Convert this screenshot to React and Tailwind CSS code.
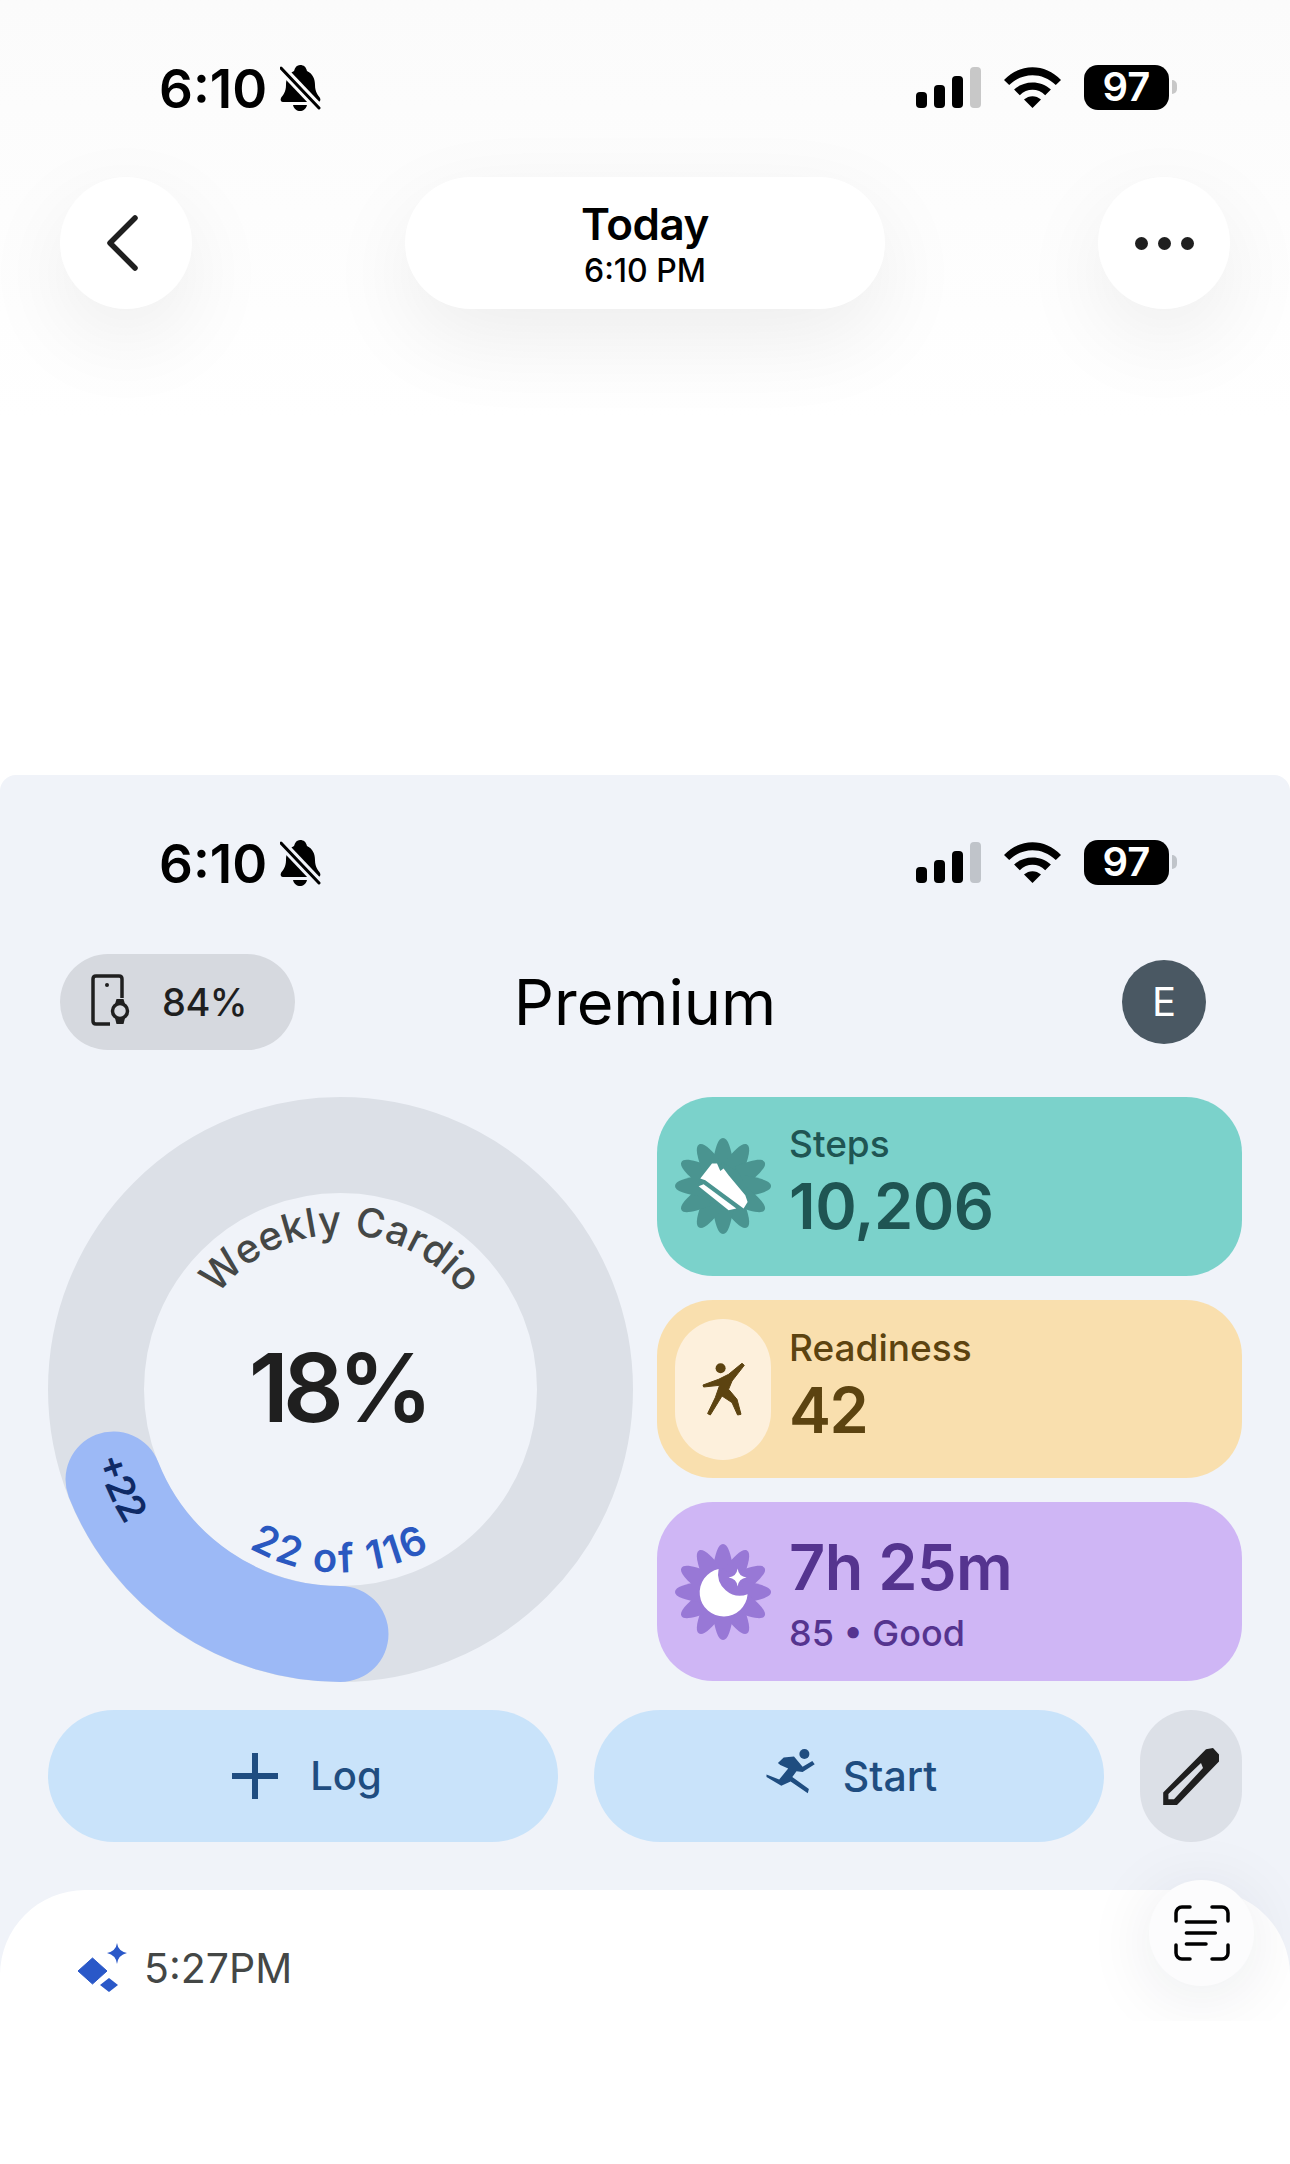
const petals = [0, 30, 60, 90, 120, 150, 180, 210, 240, 270, 300, 330];

// twelve-petal badge behind the steps and sleep icons
function Burst({ fill, children }) {
  return (
    <svg width="96" height="96" viewBox="0 0 96 96" className="shrink-0">
      <circle cx="48" cy="48" r="30" fill={fill} />
      {petals.map((deg) => (
        <path
          key={deg}
          d="M0 -48 C5 -48 8 -38 11 -20 L-11 -20 C-8 -38 -5 -48 0 -48 Z"
          fill={fill}
          transform={`translate(48 48) rotate(${deg})`}
        />
      ))}
      {children}
    </svg>
  );
}

function BellOff({ cut }) {
  return (
    <svg width="41" height="46" viewBox="0 0 41 46" className="ml-[13px] mt-[1px]">
      <path d="M20 0 C24 0 26 2 27 6 C33 9 35 14 35 20 C35 27 38 30 40 33 C41 35 40 37 38 37 H3 C1 37 0 35 1 33 C3 30 6 27 6 20 C6 14 8 9 14 6 C15 2 17 0 20 0 Z" fill="black" />
      <path d="M13 40 H27 C26 44 23 46 20 46 C17 46 14 44 13 40 Z" fill="black" />
      <path d="M1 3 L39 43" className={cut} stroke="currentColor" strokeWidth="9" />
      <path d="M1 3 L39 43" stroke="black" strokeWidth="3" strokeLinecap="round" />
    </svg>
  );
}

// same phone status bar at the top of both screens, only the greys differ
function StatusBar({ cut, off }) {
  return (
    <div className="flex items-center justify-between pt-[64px] pl-[159px] pr-[113px] h-[110px]">
      <div className="flex items-center">
        <span className="mt-[3px] text-[53px] leading-[46px] font-semibold text-black">6:10</span>
        <BellOff cut={cut} />
      </div>
      <div className="flex items-center">
        <div className="flex items-end gap-[7px] h-[41px]">
          <div className="w-[11px] h-[16px] rounded-[4px] bg-black" />
          <div className="w-[11px] h-[23px] rounded-[4px] bg-black" />
          <div className="w-[11px] h-[32px] rounded-[4px] bg-black" />
          <div className={`w-[11px] h-[41px] rounded-[4px] ${off}`} />
        </div>
        <svg width="57" height="41" viewBox="0 0 57 41" className="ml-[23px]">
          <path d="M0 13 C16 -4 41 -4 57 13 L51.8 18 C38 5 19 5 5.2 18 Z" fill="black" />
          <path d="M10.1 22.6 C20 13 37 13 46.9 22.6 L41.2 28.3 C34 21 23 21 15.8 28.3 Z" fill="black" />
          <path d="M20 32.5 C25 28 32 28 37 32.5 L28.5 41 Z" fill="black" />
        </svg>
        <div className="ml-[23px] w-[85px] h-[45px] rounded-[14px] bg-black flex items-center justify-center text-white text-[40px] font-semibold leading-none">
          97
        </div>
        <div className={`ml-[3px] w-[5px] h-[14px] rounded-r-full ${off}`} />
      </div>
    </div>
  );
}

function StatCard({ bg, icon, children }) {
  return (
    <div className={`flex-1 flex items-center pl-[18px] gap-[18px] rounded-[56px] ${bg}`}>
      {icon}
      <div className="flex flex-col">{children}</div>
    </div>
  );
}

function CardioRing() {
  return (
    <svg width="585" height="585" viewBox="0 0 585 585" className="shrink-0">
      <defs>
        <path id="topArc" d="M137.5 292.5 A155 155 0 0 1 447.5 292.5" />
        <path id="bottomArc" d="M109.5 292.5 A183 183 0 0 0 475.5 292.5" />
        <path id="gainArc" d="M48.3 362.5 A254 254 0 0 0 292.5 546.5" />
      </defs>
      <circle cx="292.5" cy="292.5" r="244.5" fill="none" stroke="#dce0e7" strokeWidth="96" />
      <path d="M65.5 382.5 A244.5 244.5 0 0 0 292.5 537" fill="none" stroke="#9cb9f6" strokeWidth="96" strokeLinecap="round" />
      <text fontSize="40" fontWeight="500" fill="#444746" letterSpacing="0.5">
        <textPath href="#topArc" startOffset="50%" textAnchor="middle">Weekly Cardio</textPath>
      </text>
      <text x="290" y="325" textAnchor="middle" fontSize="95" fontWeight="600" fill="#1f1f1f" letterSpacing="-6">18%</text>
      <text fontSize="40" fontWeight="600" fill="#2a58c0" letterSpacing="2.5">
        <textPath href="#bottomArc" startOffset="50%" textAnchor="middle">22 of 116</textPath>
      </text>
      <text fontSize="38" fontWeight="600" fill="#0f2a66">
        <textPath href="#gainArc">+22</textPath>
      </text>
    </svg>
  );
}

export default function App() {
  return (
    <div className="w-[1290px] h-[2164px] bg-white overflow-hidden font-['Inter',sans-serif]">
      {/* Today screen, only its header is in view */}
      <div className="h-[775px] bg-gradient-to-b from-[#fbfbfb] to-white to-[420px]">
        <StatusBar cut="text-[#fcfcfc]" off="bg-[#c8c8c8]" />
        <div className="mt-[67px] px-[60px] flex justify-between">
          <button className="w-[132px] h-[132px] rounded-full bg-white shadow-[0_30px_90px_rgba(0,0,0,0.07)] flex items-center justify-center">
            <svg width="40" height="58" viewBox="0 0 40 58" className="mr-[6px]">
              <path d="M32 4 L7 29 L32 54" fill="none" stroke="#1f1f1f" strokeWidth="5.5" strokeLinecap="round" strokeLinejoin="round" />
            </svg>
          </button>
          <div className="w-[480px] h-[132px] rounded-full bg-white shadow-[0_30px_90px_rgba(0,0,0,0.07)] flex flex-col items-center justify-center text-black">
            <span className="text-[44px] leading-[56px] font-semibold tracking-[-0.5px]">Today</span>
            <span className="text-[32px] leading-[38px] font-medium">6:10 PM</span>
          </div>
          <button className="w-[132px] h-[132px] rounded-full bg-white shadow-[0_30px_90px_rgba(0,0,0,0.07)] flex items-center justify-center gap-[10px]">
            <span className="w-[13px] h-[13px] rounded-full bg-[#1f1f1f]" />
            <span className="w-[13px] h-[13px] rounded-full bg-[#1f1f1f]" />
            <span className="w-[13px] h-[13px] rounded-full bg-[#1f1f1f]" />
          </button>
        </div>
      </div>

      {/* Premium screen, cut off at the bottom */}
      <div className="relative h-[1246px] rounded-t-[16px] bg-[#f0f3f9] overflow-hidden flex flex-col">
        <StatusBar cut="text-[#f0f3f9]" off="bg-[#c0c4ca]" />

        <div className="mt-[69px] px-[60px] h-[96px] grid grid-cols-[1fr_auto_1fr] items-center">
          <div className="justify-self-start w-[235px] h-[96px] rounded-full bg-[#d6d9df] flex items-center pl-[30px] gap-[32px]">
            <svg width="40" height="56" viewBox="0 0 40 56" className="shrink-0">
              <path d="M32 24 V5 C32 3 31 2 29 2 H6 C4 2 3 3 3 5 V47 C3 49 4 50 6 50 H20" fill="none" stroke="#1f1f1f" strokeWidth="3.5" />
              <circle cx="17" cy="11" r="2" fill="#1f1f1f" />
              <circle cx="30" cy="37" r="7.5" fill="none" stroke="#1f1f1f" strokeWidth="3.5" />
              <path d="M25 30 L26.5 25 H33.5 L35 30 Z M25 44 L26.5 50 H33.5 L35 44 Z" fill="#1f1f1f" />
            </svg>
            <span className="text-[38px] leading-none font-medium text-[#1f1f1f] tracking-[-0.5px]">84%</span>
          </div>
          <span className="text-[63px] leading-none text-black">Premium</span>
          <div className="justify-self-end mr-[24px] w-[84px] h-[84px] rounded-full bg-[#4a5863] flex items-center justify-center text-white text-[40px]">
            E
          </div>
        </div>

        <div className="mt-[47px] px-[48px] flex gap-[24px] h-[584px]">
          <CardioRing />
          <div className="flex-1 flex flex-col gap-[24px]">
            <StatCard
              bg="bg-[#7bd2cb]"
              icon={
                <Burst fill="#4a9490">
                  <path d="M25.3 40.6 L37 25.6 L42 25.6 L45.3 33 L48.6 30.6 L53.6 37.3 L70.3 57.3 L72.6 64 L68.6 70.6 L30.3 42.3 Z" fill="white" />
                  <path d="M23.6 48.3 L28.6 46.3 L61.3 70.6 L53.6 72.3 Z" fill="white" />
                </Burst>
              }
            >
              <span className="-mt-[4px] text-[37px] leading-[44px] font-medium text-[#1f5553]">Steps</span>
              <span className="text-[63px] leading-[80px] font-semibold text-[#1f5553] tracking-[-0.5px]">10,206</span>
            </StatCard>
            <StatCard
              bg="bg-[#f9dfae]"
              icon={
                <div className="w-[96px] h-[141px] rounded-full bg-[#fdf0dc] flex items-center justify-center shrink-0">
                  <svg width="96" height="96" viewBox="0 0 96 96">
                    <circle cx="45.6" cy="27.3" r="5" fill="#5c4310" />
                    <path d="M28 44 L43.6 38.3 L53.6 33.3 L67 22.3 L69.3 24.3 L57 40 L53.6 48.3 L62 58.3 L66 73.3 L62.6 74 L57 61.6 L47 55 L35.3 74 L32.6 72.6 L40.3 56.6 L44.6 44.3 L28.6 46 Z" fill="#5c4310" stroke="#5c4310" strokeLinejoin="round" />
                  </svg>
                </div>
              }
            >
              <span className="-mt-[2px] text-[37px] leading-[44px] font-medium text-[#5c4310]">Readiness</span>
              <span className="text-[63px] leading-[80px] font-semibold text-[#5c4310] tracking-[-1.5px]">42</span>
            </StatCard>
            <StatCard
              bg="bg-[#cfb6f5]"
              icon={
                <Burst fill="#9878d6">
                  <path d="M43.6 25 A24 24 0 1 0 72.6 50.3 A22 22 0 0 1 43.6 25 Z" fill="white" />
                  <path d="M62.6 24.6 Q63.6 32.6 71.6 33.6 Q63.6 34.6 62.6 42.6 Q61.6 34.6 53.6 33.6 Q61.6 32.6 62.6 24.6 Z" fill="white" />
                </Burst>
              }
            >
              <span className="text-[63px] leading-[76px] font-semibold text-[#55348f] tracking-[-0.5px]">7h 25m</span>
              <span className="mt-[6px] text-[36px] leading-[44px] font-medium text-[#55348f]">85 • Good</span>
            </StatCard>
          </div>
        </div>

        <div className="mt-[29px] px-[48px] flex gap-[36px]">
          <button className="w-[510px] h-[132px] rounded-full bg-[#c9e3fa] flex items-center justify-center gap-[32px] pl-[8px] text-[#1f4d80] shrink-0">
            <svg width="46" height="46" viewBox="0 0 46 46">
              <path d="M23 0 V46 M0 23 H46" stroke="#1f4d80" strokeWidth="6" />
            </svg>
            <span className="text-[40px] leading-none font-medium">Log</span>
          </button>
          <button className="w-[510px] h-[132px] rounded-full bg-[#c9e3fa] flex items-center justify-center gap-[22px] text-[#1f4d80] shrink-0">
            <svg width="60" height="60" viewBox="0 0 60 60" className="mb-[4px]">
              <circle cx="43.4" cy="10" r="5" fill="#1f4d80" />
              <path d="M5.5 30.6 L18.2 35.5 L27.2 24.4 L19.3 21 L16.9 18.9 L22.7 13.4 L33 12.4 L41.6 22.7 L51.3 16.9 L53.7 20.3 L41.6 27.9 L35.5 27.2 L31.3 33 L47.9 45 L46.8 49.2 L29.6 37.5 L20.3 41.7 L5.5 33 Z" fill="#1f4d80" />
            </svg>
            <span className="text-[41px] leading-none font-medium">Start</span>
          </button>
          <button className="w-[102px] h-[132px] rounded-full bg-[#dce0e7] flex items-center justify-center shrink-0">
            <svg width="64" height="64" viewBox="0 0 64 64" className="mb-[2px]">
              <path
                fillRule="evenodd"
                d="M4.2 62 L4.2 49.4 L47 6.3 L54 5 L60 11.5 L60 18.4 L18 62 Z M9.4 56.3 L15 56.3 L44 25 L42 20 L9.4 51 Z"
                fill="#1f1f1f"
              />
            </svg>
          </button>
        </div>

        <div className="mt-[48px] flex-1 rounded-t-[85px] bg-white pt-[53px] pl-[77px] flex items-start gap-[17px]">
          <svg width="50" height="50" viewBox="0 0 50 50" className="shrink-0">
            <path d="M15.5 15 L30 28 L15.5 41 L1 28 Z" fill="#2a58c8" stroke="#2a58c8" strokeLinejoin="round" />
            <path d="M40 0 Q41 8 50 10 Q41 12 40 21 Q39 12 30 10 Q39 8 40 0 Z" fill="#2a58c8" />
            <path d="M32 35 L41 42 L32 49 L23 42 Z" fill="#2a58c8" />
          </svg>
          <span className="text-[41px] leading-[50px] text-[#444746]">5:27PM</span>
        </div>

        <button className="absolute right-[36px] top-[1105px] w-[105px] h-[106px] rounded-full bg-[#fcfcfd] shadow-[0_10px_70px_rgba(20,30,60,0.09)] flex items-center justify-center">
          <svg width="56" height="56" viewBox="0 0 56 56" fill="none" stroke="black" strokeWidth="3.5" strokeLinecap="round">
            <path d="M2 16 V8 A6 6 0 0 1 8 2 H16 M38 2 H48 A6 6 0 0 1 54 8 V16 M2 40 V48 A6 6 0 0 0 8 54 H16 M38 54 H48 A6 6 0 0 0 54 48 V40" />
            <path d="M12.4 17 H41.3 M12.4 28 H41.3 M12.4 39 H32" />
          </svg>
        </button>
      </div>
    </div>
  );
}
